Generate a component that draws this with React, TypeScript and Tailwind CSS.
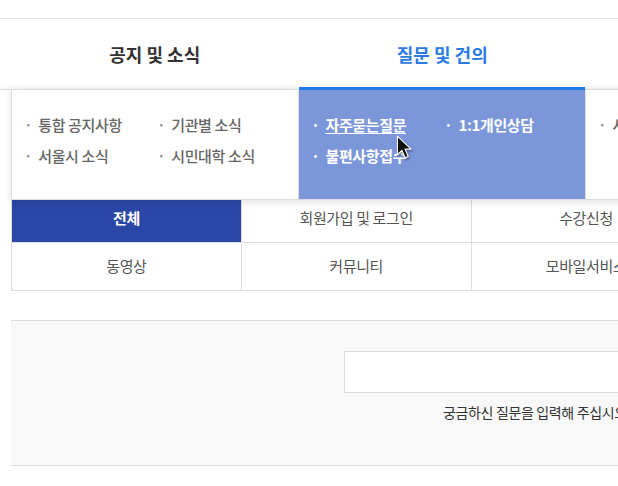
import React from 'react'

const FONT = { fontFamily: '"Noto Sans CJK KR", "Noto Sans", sans-serif' }

type Menu = {
  title: string
  items: string[]
}

const MENUS: Menu[] = [
  { title: '공지 및 소식', items: ['통합 공지사항', '기관별 소식', '서울시 소식', '시민대학 소식'] },
  { title: '질문 및 건의', items: ['자주묻는질문', '1:1개인상담', '불편사항접수'] },
  { title: '서비스 안내', items: ['서비스 안내'] },
  { title: '참여 마당', items: ['참여 마당'] },
]

const CATEGORIES = ['전체', '회원가입 및 로그인', '수강신청', '학습', '증명서', '동영상', '커뮤니티', '모바일서비스', '기타', '시민대학']

function Cursor() {
  return (
    <svg
      width="18"
      height="26"
      viewBox="0 0 16 24"
      className="absolute left-[97px] top-[45px] drop-shadow-[1px_2px_1px_rgba(0,0,0,0.35)]"
    >
      <path
        d="M1 1 L1 18 L5.2 14.2 L8.2 21 L11 19.8 L8 13 L13.6 13 Z"
        fill="#111"
        stroke="#fff"
        strokeWidth="1"
        strokeLinejoin="round"
      />
    </svg>
  )
}

export default function App() {
  const active = 1

  return (
    <div className="relative w-[618px] h-[486px] overflow-hidden bg-white" style={FONT}>
      <div className="h-[18px]" />
      {/* top nav */}
      <div className="border-t border-[#e6e6e6] border-b border-b-[#dedede] bg-white shadow-[inset_0_-8px_8px_-8px_rgba(0,0,0,0.06)]">
        <div className="ml-[11px] w-[1150px] flex h-[70px]">
          {MENUS.map((m, i) => (
            <div
              key={m.title}
              className={`flex-1 flex items-center justify-center text-[18px] font-bold ${
                i === active ? 'text-[#2b7be4]' : 'text-[#333]'
              }`}
            >
              {m.title}
            </div>
          ))}
        </div>
      </div>

      {/* page content */}
      <div className="ml-[11px] w-[1150px]">
        <div className="h-[104px]" />
        <div className="grid grid-cols-5 border-l border-t border-[#dcdcdc]">
          {CATEGORIES.map((c, i) => (
            <div
              key={c}
              className={`h-[48px] flex items-center justify-center border-r border-b border-[#dcdcdc] text-[15px] tracking-tight ${
                i === 0 ? 'bg-[#2a47a8] text-white font-bold' : 'text-[#555]'
              }`}
            >
              {c}
            </div>
          ))}
        </div>

        <div className="mt-[29px] h-[146px] bg-[#f8f8f8] border-t border-b border-[#dcdcdc] pt-[30px]">
          <div className="ml-[333px] w-[484px] h-[42px] bg-white border border-[#dcdcdc]" />
          <p className="ml-[432px] mt-[9px] text-[14px] text-[#333] tracking-tight">
            궁금하신 질문을 입력해 주십시오.
          </p>
        </div>
      </div>

      {/* mega menu dropdown */}
      <div className="absolute left-[11px] top-[89px] w-[1150px] h-[111px] flex bg-white border border-[#dcdcdc] shadow-[0_2px_8px_rgba(0,0,0,0.12)]">
        {MENUS.map((m, i) => {
          const on = i === active
          return (
            <div
              key={m.title}
              className={`relative flex-1 border-r border-[#dcdcdc] ${on ? 'bg-[#7b96d9]' : 'bg-white'}`}
            >
              {on && <div className="absolute -top-[3px] left-0 right-0 h-[3px] bg-[#1e7ce8]" />}
              <ul className="grid grid-cols-[133px_133px] gap-y-[11px] pl-[12px] pt-[25px]">
                {m.items.map((it, j) => (
                  <li
                    key={it}
                    className={`flex items-center text-[15px] tracking-tight leading-[20px] ${
                      on ? 'text-white font-bold' : 'text-[#666] font-medium'
                    }`}
                  >
                    <span className={`mr-[6px] ${on ? 'text-white' : 'text-[#888]'}`}>·</span>
                    <span className={on && j === 0 ? 'underline underline-offset-2' : ''}>{it}</span>
                  </li>
                ))}
              </ul>
              {on && <Cursor />}
            </div>
          )
        })}
      </div>
    </div>
  )
}
